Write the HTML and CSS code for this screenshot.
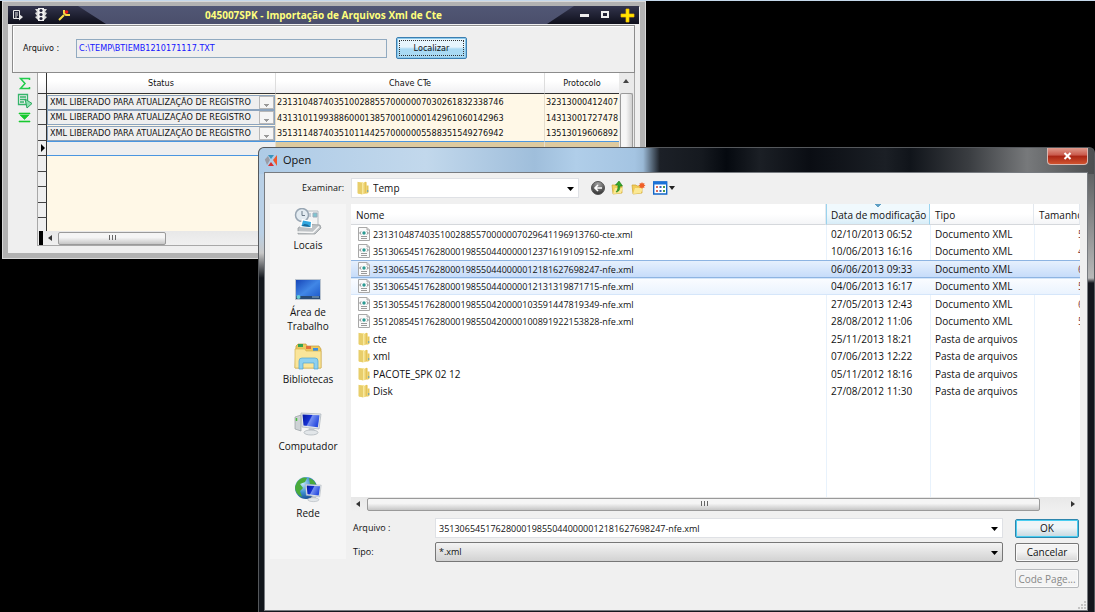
FILE: index.html
```html
<!DOCTYPE html>
<html lang="pt-BR">
<head>
<meta charset="utf-8">
<title>Importação de Arquivos Xml de Cte</title>
<link rel="stylesheet" href="styles.css">
</head>
<body>
<svg class="defs" aria-hidden="true">
  <defs>
    <linearGradient id="g-folder" x1="0" x2="1"><stop offset="0" stop-color="#fbeeaa"/><stop offset="1" stop-color="#e0b93f"/></linearGradient>
    <linearGradient id="g-screen" x1="0" x2="1" y2="1"><stop offset="0" stop-color="#1746b8"/><stop offset=".5" stop-color="#4187e6"/><stop offset="1" stop-color="#1a55c8"/></linearGradient>
    <linearGradient id="g-mon" x1="0" x2="1" y2=".4"><stop offset="0" stop-color="#0417a0"/><stop offset=".48" stop-color="#1631d2"/><stop offset=".55" stop-color="#7690f0"/><stop offset="1" stop-color="#2a4de0"/></linearGradient>
    <radialGradient id="g-globe" cx=".35" cy=".3" r=".8"><stop offset="0" stop-color="#bfe6fb"/><stop offset=".5" stop-color="#3d8fd0"/><stop offset="1" stop-color="#123f87"/></radialGradient>
    <radialGradient id="g-back" cx=".5" cy=".2" r=".8"><stop offset="0" stop-color="#a5a5a5"/><stop offset="1" stop-color="#303030"/></radialGradient>
    <symbol id="i-xml" viewBox="0 0 14 14"><path d="M1.500.5h8.500l2.500 2.500v10.500h-11z" fill="#fafafa" stroke="#a8a8a8"/><path d="M10 .5v2.500h2.500" fill="#ddd" stroke="#aaa"/><path d="M4 4.500 2.700 6 4 7.500M10 4.500 11.300 6 10 7.500" fill="none" stroke="#777"/><circle cx="7" cy="6" r="1.700" fill="#2c9a93"/><path d="M4 9.500h6M4 11.500h6" stroke="#999"/></symbol>
    <symbol id="i-folder" viewBox="0 0 14 14"><path d="M2 1h5v12H2z" fill="#f8e79b"/><path d="M1.500.8 6 2v11.500l-4.500-1.200z" fill="#e8ce6b"/><path d="M6 2.200 9.500.8l1 .4v11L6 13.500z" fill="url(#g-folder)"/><path d="M10.500 4.500h2v7l-2 1.500z" fill="#e5c75a"/><path d="M11 9h1.300v2H11z" fill="#7fa9a8"/></symbol>
    <symbol id="i-monitor" viewBox="0 0 28 24"><path d="m7 1 20 1-2 15-17-2z" fill="#e3e8ec" stroke="#a8b0b8" stroke-width=".7"/><path d="m8.500 2.500 17 .8-1.600 12-14.400-1.700z" fill="url(#g-mon)"/><path d="m15 16 5 .6 1 3-7 0z" fill="#c3cad0"/><ellipse cx="17" cy="20.500" rx="7" ry="2.500" fill="#e2e6e9" stroke="#a9b0b6" stroke-width=".7"/></symbol>
  </defs>
</svg>

<main class="desktop">
  <section class="app" aria-label="Importação de Arquivos Xml de Cte">
    <header class="app-bar">
      <div class="app-tools">
        <svg width="12" height="12" viewBox="0 0 12 12"><path d="M1.500 1.500h6v8h-6zM3 4h3M3 6h3M3 8h2" fill="none" stroke="#e8e8e8"/><path d="m7 5 4 3-4 3.500z" fill="#e8e8e8"/></svg>
        <svg width="14" height="16" viewBox="0 0 14 16"><path d="M1 2h12l-2 3 2 1-2 3 2 1-3 3H4l-3-3 2-1-2-3 2-1z" fill="#dcdcdc"/><path d="M4 1h6v13H4z" fill="#f2f2f2"/><circle cx="7" cy="3.500" r="1.600" fill="#26263c"/><circle cx="7" cy="7.500" r="1.600" fill="#26263c"/><circle cx="7" cy="11.500" r="1.600" fill="#26263c"/></svg>
        <svg width="13" height="14" viewBox="0 0 13 14"><path d="m1 12 5-5M6 2v3l2 2h4" fill="none" stroke="#f6dc45" stroke-width="2"/><circle cx="8.500" cy="4" r="1.800" fill="#e61b1b"/></svg>
      </div>
      <h1 class="app-title">045007SPK - Importação de Arquivos Xml de Cte</h1>
      <div class="app-controls">
        <button aria-label="Minimizar"><svg width="11" height="12"><path d="M1 5h9v3H1z" fill="#eee"/></svg></button>
        <button aria-label="Maximizar"><svg width="10" height="12"><path d="M2 3h6v5H2z" fill="none" stroke="#eee" stroke-width="2"/></svg></button>
        <button aria-label="Fechar"><svg width="15" height="15"><path d="M6 1h3v5h5v3H9v5H6V9H1V6h5z" fill="#ffe600" stroke="#f5b800" stroke-width=".7"/></svg></button>
      </div>
    </header>
    <div class="search">
      <label for="path">Arquivo :</label>
      <input id="path" class="path" value="C:\TEMP\BTIEMB1210171117.TXT">
      <button class="locate">Localizar</button>
    </div>
    <div class="work">
      <nav class="rail">
        <button aria-label="Somar"><svg width="13" height="13"><path d="M11.500 3V1.500h-9L7 6.500l-4.500 5h9V10" fill="none" stroke="#21cc4b" stroke-width="1.500"/></svg></button>
        <button aria-label="Exportar"><svg width="16" height="16"><path d="M1.500 1.500h9v10h-9zM3 4h6M3 6.500h6M3 9h4" fill="none" stroke="#35b56b" stroke-width="1.300"/><path d="m8 6 7 4.500L10 15z" fill="#8adfae" stroke="#2aa65d"/></svg></button>
        <button aria-label="Último"><svg width="13" height="12"><path d="M1 1h11v1H1zM2 3h9L6.500 7.500zM1 9h11v1H1z" fill="#17c92f" stroke="#17c92f" stroke-width=".6"/></svg></button>
      </nav>
      <div class="grid">
        <div class="grid-main">
          <div class="grid-view">
            <table class="cte">
              <colgroup><col class="c-mark"><col class="c-status"><col class="c-key"><col></colgroup>
              <thead><tr><th></th><th>Status</th><th>Chave CTe</th><th>Protocolo</th></tr></thead>
              <tbody>
                <tr><td></td><td><select class="status" aria-label="Status 1"><option>XML LIBERADO PARA ATUALIZAÇÃO DE REGISTRO</option></select></td><td>23131048740351002885570000007030261832338746</td><td>32313000412407</td></tr>
                <tr><td></td><td><select class="status" aria-label="Status 2"><option>XML LIBERADO PARA ATUALIZAÇÃO DE REGISTRO</option></select></td><td>43131011993886000138570010000142961060142963</td><td>14313001727478</td></tr>
                <tr><td></td><td><select class="status" aria-label="Status 3"><option>XML LIBERADO PARA ATUALIZAÇÃO DE REGISTRO</option></select></td><td>35131148740351011442570000005588351549276942</td><td>13513019606892</td></tr>
                <tr class="current"><td><svg width="6" height="8"><path d="M1 0v8l4-4z"/></svg></td><td></td><td></td><td></td></tr>
                <tr class="blank"><td></td><td colspan="3"></td></tr>
                <tr class="blank"><td></td><td colspan="3"></td></tr>
                <tr class="blank"><td></td><td colspan="3"></td></tr>
                <tr class="blank"><td></td><td colspan="3"></td></tr>
                <tr class="blank"><td></td><td colspan="3"></td></tr>
              </tbody>
            </table>
          </div>
          <div class="vscroll"><svg width="7" height="20"><path d="M0 10h6L3 6z" fill="#444"/></svg><div class="vthumb"></div></div>
        </div>
        <div class="hscroll"><i class="stop"></i><svg width="12" height="8"><path d="M9 1v6L5 4z" fill="#333"/></svg><div class="hthumb short"><svg width="8" height="6"><path d="M1.500 0v5M4.500 0v5M7.500 0v5" stroke="#666"/></svg></div></div>
      </div>
    </div>
  </section>

  <section class="dialog" role="dialog" aria-label="Open">
    <header class="dlg-bar">
      <svg width="14" height="13" viewBox="0 0 14 13"><path d="m4 1 3 4 3-4z" fill="#3a93bd"/><path d="m13 1-4 5 4 6z" fill="#f0572b"/><path d="m4 12 3-4 3 4z" fill="#d92f2f"/><path d="M4 2 .800 5.500 3 11l3-5z" fill="#9a9ca6"/></svg>
      <h2 class="dlg-title">Open</h2>
      <button class="close" aria-label="Fechar"><svg width="9" height="8"><path d="m1.500 1 6 6m0-6-6 6" stroke="#fff" stroke-width="2"/></svg></button>
    </header>
    <div class="dlg-body">
      <div class="lookbar">
        <label for="look">Examinar:</label>
        <div class="combo look">
          <svg class="lead" width="14" height="14"><use href="#i-folder"/></svg>
          <select id="look"><option>Temp</option></select>
          <svg class="arrow" width="7" height="4"><path d="M0 0h7L3.500 4z"/></svg>
        </div>
        <div class="look-tools">
          <button aria-label="Voltar"><svg width="14" height="14"><circle cx="7" cy="7" r="6.500" fill="url(#g-back)" stroke="#555"/><path d="M11 7H4m3-3L4 7l3 3" fill="none" stroke="#fff" stroke-width="1.600"/></svg></button>
          <button aria-label="Subir"><svg width="14" height="15"><path d="M1 5h4l1 1h5v7l-9 1z" fill="#f2d15c" stroke="#cfa530" stroke-width=".7"/><path d="m2 14 2-6h8l-2 5z" fill="#fbe995"/><path d="M5 12c3 0 4-3 4-6H11.500L8 1 4.500 5H7c0 3 0 5-2 7z" fill="#35a82a" stroke="#1c7b16" stroke-width=".6"/></svg></button>
          <button aria-label="Nova pasta"><svg width="15" height="14"><path d="M1 4h4l1 1h5v7l-9 1z" fill="#f1cc59" stroke="#cfa530" stroke-width=".7"/><path d="m2 13 2-6h8l-2 5z" fill="#fbe995"/><path d="m11 1 .8 1.400 1.700-.4-.5 1.600 1.500.9-1.500.8.5 1.600-1.700-.4L11 8l-.8-1.500-1.700.4.500-1.600-1.500-.8 1.500-.9-.5-1.600 1.700.4z" fill="#ef5f28"/></svg></button>
          <button aria-label="Exibir"><svg width="23" height="14"><path d="M.7 1h13v12H.7z" fill="#fff" stroke="#1266c8" stroke-width="1.400"/><path d="M0 .5h14v3H0z" fill="#1a72d8"/><path d="M3 5h2v2H3zM3 9h2v2H3z" fill="#d96b5a"/><path d="M6.500 5h2v2h-2zM6.500 9h2v2h-2z" fill="#3561c0"/><path d="M10 5h2v2h-2zM10 9h2v2h-2z" fill="#4a9a4a"/><path d="M16 5h6l-3 4z" fill="#222"/></svg></button>
        </div>
      </div>
      <div class="dlg-main">
        <nav class="places">
          <a href="#"><svg width="28" height="28" viewBox="0 0 28 28"><path d="M10 3h14v16H10z" fill="#f4f4f4" stroke="#b6bcc1"/><path d="M12 6h5M12 8h5M19 5h4v4h-4z" stroke="#9ab" fill="#7ec6d0"/><circle cx="8" cy="7" r="6.500" fill="#e3ebf1" stroke="#98a6b3" stroke-width="1.500"/><path d="M8 3v4.500h3" fill="none" stroke="#6c7c8a"/><path d="m4 20 6-4 16 1 1 3-6 6H4z" fill="#bfc3c6" stroke="#8d9296" stroke-width=".7"/><path d="m3 24 16 .500 6-6" fill="none" stroke="#f6f6f6" stroke-width="1.500"/><path d="m8 11 10 2v7L6 19z" fill="#fff"/><path d="m9 12.500 8 1.500-.5 5L7.500 18z" fill="#31a7df"/><path d="m7.500 18 3-2 3 .5 3 2.500z" fill="#196a9b"/></svg><span>Locais</span></a>
          <a href="#"><svg width="28" height="28" viewBox="0 0 28 28"><path d="M1 4h26v21H1z" fill="#b9c3cf"/><path d="M2 5h24v19H2z" fill="url(#g-screen)"/><path d="M2 21h24v3H2z" fill="#294b74"/><circle cx="4.500" cy="22" r="2" fill="#66cbd4"/><path d="M18 22h7" stroke="#8fb1cc"/></svg><span>Área de Trabalho</span></a>
          <a href="#"><svg width="28" height="28" viewBox="0 0 28 28"><path d="M2 4 4 2h8l1 2h12l2 3v19H1z" fill="#ecc85f" stroke="#c49c36" stroke-width=".7"/><path d="M4 2h5v3H4z" fill="#35a353"/><path d="M12 4h5v3h-5z" fill="#e4703d"/><path d="M19 6h5v3h-5z" fill="#3c8fdd"/><path d="M1 7h10l1 2h15v17H1z" fill="#fae59a" stroke="#d6b450" stroke-width=".7"/><path d="M5 27v-8q0-3 3-3h13q3 0 3 3v8h-4v-6H9v6z" fill="#8ed0ef" stroke="#4ea5d2" stroke-width=".7"/></svg><span>Bibliotecas</span></a>
          <a href="#"><svg width="28" height="28" viewBox="0 0 28 28"><path d="m1 8 6-2v16l-6-2z" fill="#cdd2d5" stroke="#979da2" stroke-width=".7"/><path d="M2.500 9v3" stroke="#49bd3d" stroke-width="1.500"/><svg y="3" width="28" height="24"><use href="#i-monitor"/></svg></svg><span>Computador</span></a>
          <a href="#"><svg width="28" height="28" viewBox="0 0 28 28"><circle cx="12" cy="12" r="11" fill="url(#g-globe)"/><path d="M3 6q5-6 10-4l-2 4-5 2 3 4-3 3 2 6q-7-3-7-10zM15 2q6 2 7 7l-6-1z" fill="#4aab3a"/><svg x="6" y="6" width="22" height="22"><use href="#i-monitor"/></svg></svg><span>Rede</span></a>
        </nav>
        <div class="pane">
          <div class="list">
            <table class="files">
              <colgroup><col><col class="c-date"><col class="c-type"><col class="c-size"></colgroup>
              <thead><tr><th>Nome</th><th class="sorted">Data de modificação</th><th>Tipo</th><th>Tamanho</th></tr></thead>
              <tbody>
                <tr><td class="doc"><svg width="14" height="14"><use href="#i-xml"/></svg>23131048740351002885570000007029641196913760-cte.xml</td><td>02/10/2013 06:52</td><td>Documento XML</td><td class="size">5 KB</td></tr>
                <tr><td class="doc"><svg width="14" height="14"><use href="#i-xml"/></svg>35130654517628000198550440000012371619109152-nfe.xml</td><td>10/06/2013 16:16</td><td>Documento XML</td><td class="size">4 KB</td></tr>
                <tr class="selected"><td class="doc"><svg width="14" height="14"><use href="#i-xml"/></svg>35130654517628000198550440000012181627698247-nfe.xml</td><td>06/06/2013 09:33</td><td>Documento XML</td><td class="size">6 KB</td></tr>
                <tr class="hover"><td class="doc"><svg width="14" height="14"><use href="#i-xml"/></svg>35130654517628000198550440000012131319871715-nfe.xml</td><td>04/06/2013 16:17</td><td>Documento XML</td><td class="size">5 KB</td></tr>
                <tr><td class="doc"><svg width="14" height="14"><use href="#i-xml"/></svg>35130554517628000198550420000103591447819349-nfe.xml</td><td>27/05/2013 12:43</td><td>Documento XML</td><td class="size">6 KB</td></tr>
                <tr><td class="doc"><svg width="14" height="14"><use href="#i-xml"/></svg>35120854517628000198550420000100891922153828-nfe.xml</td><td>28/08/2012 11:06</td><td>Documento XML</td><td class="size">5 KB</td></tr>
                <tr><td><svg width="14" height="14"><use href="#i-folder"/></svg>cte</td><td>25/11/2013 18:21</td><td>Pasta de arquivos</td><td></td></tr>
                <tr><td><svg width="14" height="14"><use href="#i-folder"/></svg>xml</td><td>07/06/2013 12:22</td><td>Pasta de arquivos</td><td></td></tr>
                <tr><td><svg width="14" height="14"><use href="#i-folder"/></svg>PACOTE_SPK 02 12</td><td>05/11/2012 18:16</td><td>Pasta de arquivos</td><td></td></tr>
                <tr><td><svg width="14" height="14"><use href="#i-folder"/></svg>Disk</td><td>27/08/2012 11:30</td><td>Pasta de arquivos</td><td></td></tr>
              </tbody>
            </table>
          </div>
          <div class="hscroll"><svg width="16" height="8"><path d="M9 1v6L5 4z" fill="#333"/></svg><div class="hthumb long"><svg width="8" height="6"><path d="M1.500 0v5M4.500 0v5M7.500 0v5" stroke="#666"/></svg></div><svg width="40" height="8"><path d="M31 1v6l4-3z" fill="#333"/></svg></div>
          <form class="form">
            <label for="file">Arquivo :</label>
            <div class="combo"><input id="file" value="35130654517628000198550440000012181627698247-nfe.xml"><svg class="arrow" width="7" height="4"><path d="M0 0h7L3.500 4z"/></svg></div>
            <button type="button" class="btn ok">OK</button>
            <label for="kind">Tipo:</label>
            <div class="combo kind"><select id="kind"><option>*.xml</option></select><svg class="arrow" width="7" height="4"><path d="M0 0h7L3.500 4z"/></svg></div>
            <button type="button" class="btn">Cancelar</button>
            <button type="button" class="btn code" disabled>Code Page...</button>
          </form>
        </div>
      </div>
      <svg class="grip" width="9" height="9"><path d="M7 1h2v2H7zM4 4h2v2H4zM7 4h2v2H7zM1 7h2v2H1zM4 7h2v2H4zM7 7h2v2H7z" fill="#c4c4c4"/></svg>
    </div>
  </section>
</main>
</body>
</html>
```
FILE: styles.css
```css
* { box-sizing: border-box; }
body {
  margin: 0;
  background: #000;
  color: #111;
  font: 10px/14px "Open Sans", "Noto Sans", sans-serif;
}
button, input, select {
  margin: 0;
  padding: 0;
  border: 0;
  background: none;
  color: inherit;
  font: inherit;
  appearance: none;
}
svg { display: block; flex: none; }
h1, h2 { margin: 0; font-size: inherit; }
table { width: 100%; border-collapse: separate; border-spacing: 0; table-layout: fixed; }
th, td { padding: 0; white-space: nowrap; overflow: hidden; text-align: left; font-weight: 400; }
.defs { position: absolute; width: 0; height: 0; }

.desktop {
  position: relative;
  height: 100vh;
  overflow: hidden;
  border-top: 1px solid #c5d8eb;
}

/* Import window */
.app {
  position: absolute;
  left: 2px;
  top: 0;
  width: 644px;
  padding: 4px 6px 6px 5px;
  background: #efefef;
  border: 1px solid #d8d8d8;
  box-shadow: inset 0 0 0 5px #b2b2b2;
  font: 9px/14px "DejaVu Sans Condensed", "Open Sans", sans-serif;
}
.app-bar {
  display: grid;
  grid-template-columns: 100px 1fr 100px;
  align-items: center;
  height: 18px;
  background: linear-gradient(#515775, #4b4f6c);
}
.app-tools, .app-controls { display: flex; align-items: center; height: 100%; background: linear-gradient(#32344c, #0f101c); }
.app-tools { gap: 10px; padding-left: 4px; clip-path: polygon(0 0, 70% 0, 98% 100%, 0 100%); }
.app-controls { gap: 10px; padding-right: 4px; justify-content: flex-end; clip-path: polygon(35% 0, 100% 0, 100% 100%, 8% 100%); }
.app-title { color: #ffff7d; font: bold 10px/18px "Open Sans", sans-serif; text-align: center; white-space: nowrap; }
.search {
  display: flex;
  align-items: center;
  height: 48px;
  margin: 1px 4px 0;
  padding: 0 10px 2px;
  border: 1px solid #8c8c8c;
  box-shadow: inset 1px 1px #fff;
}
.search label { width: 53px; }
.path { width: 311px; height: 19px; padding: 0 2px; border: 1px solid #91aac0; color: #1414ff; }
.locate {
  width: 71px;
  height: 22px;
  margin-left: 9px;
  border: 1px solid #3c7fb1;
  border-radius: 2px;
  background: linear-gradient(#e6f5fd 45%, #a9daf4 55%);
  box-shadow: inset 0 0 0 1px #8cc8ea;
  outline: 1px dotted #333;
  outline-offset: -4px;
}
.work { display: flex; padding: 0 4px 6px; }
.rail { display: flex; flex-direction: column; align-items: center; gap: 3px; width: 25px; padding-top: 4px; }
.grid { flex: 1; min-width: 0; border: solid #a8a8a8; border-width: 0 1px 1px; }
.grid-main { display: flex; height: 158px; }
.grid-view { flex: 1; min-width: 0; overflow: hidden; background: #fff8e7; }
.c-mark { width: 9px; }
.c-status { width: 229px; }
.c-key { width: 269px; }
.cte th { height: 21px; text-align: center; background: linear-gradient(#fff 40%, #f0f0f2); border-right: 1px solid #ddd; border-bottom: 1px solid #333; }
.cte td { height: 15px; line-height: 14px; padding-left: 1px; border-right: 1px solid #e4ddcd; }
.cte td:last-child, .cte th:last-child { border-right: 0; }
.cte tr:nth-child(odd) td { height: 16px; }
.cte td:first-child { background: #efefef; border-right: 1px solid #333; border-bottom: 1px solid #444; padding-left: 2px; }
.cte th:first-child { border-right-color: #333; }
.cte td:nth-child(2) { padding: 0; }
.status {
  display: block;
  width: 100%;
  height: 15px;
  padding: 0 16px 0 2px;
  border: 1px solid #8ba3bd;
  background:
    linear-gradient(#999, #999) right 5px top 8px / 5px 1px no-repeat,
    linear-gradient(#999, #999) right 6px top 9px / 3px 1px no-repeat,
    linear-gradient(#999, #999) right 7px top 10px / 1px 1px no-repeat,
    linear-gradient(#f5f5f5, #f5f5f5) right 1px top 1px / 13px 11px no-repeat,
    linear-gradient(#b8b8b8, #b8b8b8) right 0 top 0 / 15px 13px no-repeat,
    #efefef;
  overflow: hidden;
  white-space: nowrap;
  line-height: 13px;
}
.current td { background: #ddca9f; border-top: 1px solid #4a96e0; }
.current td:first-child { border-top: 0; }
.current td:nth-child(2) { background: #efefef; border-bottom: 1px solid #4a96e0; }
.blank td { border-right: 0; }
.vscroll { display: flex; flex-direction: column; align-items: center; width: 15px; background: #eaeaea; }
.vthumb { flex: 1; width: 13px; border: 1px solid #9a9a9a; border-bottom: 0; border-radius: 2px; background: linear-gradient(90deg, #f6f6f6 45%, #cfcfcf); }
.hscroll { display: flex; align-items: center; height: 14px; background: linear-gradient(#e8e8e8, #f0f0f0); }
.stop { width: 4px; height: 14px; margin-left: 1px; background: #000; }
.hthumb { display: flex; align-items: center; justify-content: center; height: 13px; border: 1px solid #9a9a9a; border-radius: 2px; background: linear-gradient(#f5f5f5 40%, #c6c6c6); }
.short { width: 108px; margin-left: 3px; }
.long { flex: 1; }

/* File dialog */
.dialog {
  position: absolute;
  left: 258px;
  top: 146px;
  right: 0;
  bottom: 0;
  display: flex;
  flex-direction: column;
  padding: 0 6px 1px 5px;
  border: 1px solid #55585c;
  border-bottom: 0;
  border-radius: 6px 6px 0 0;
  background:
    linear-gradient(90deg, #aecbe6, #c2d8ec 20%, #9fbedb 33%, #b0cee9 38%, #a4c4e2 45%, #9ab9d6 46%, #1c2027 48%, #15191f 53%, #05090f 56%, #1b1f25 60%, #0a0d13 66%, #1b1f25 75%, #10141a 78%, #3a3d41 85%, #77797b 92%, #4c4e50) top / 100% 26px no-repeat,
    linear-gradient(#b9d0e6 85px, #c8c8c8 105px, #11151b 130px) left / 6px 100% no-repeat,
    linear-gradient(#4c4e50, #b8b8b8 130px, #14161d 135px) right / 7px 100% no-repeat,
    #14161d;
}
.dlg-bar { display: flex; align-items: center; height: 24px; flex: none; color: #101010; }
.dlg-title { flex: 1; margin-left: 5px; font-size: 11px; font-weight: 400; }
.close {
  display: flex;
  align-items: center;
  justify-content: center;
  align-self: flex-start;
  width: 41px;
  height: 17px;
  border: 1px solid #d8b8b2;
  border-top: 0;
  border-radius: 0 0 4px 4px;
  background: linear-gradient(#e09a8c, #c9584a 45%, #a92414 50%, #d0532f);
}
.dlg-body {
  position: relative;
  flex: 1;
  min-height: 0;
  padding: 4px 7px 0 5px;
  border: 1px solid #777b80;
  background: #f0f0f0;
}
.lookbar { display: flex; align-items: center; height: 21px; }
.lookbar label { width: 81px; padding-right: 7px; text-align: right; font-size: 9px; }
.combo { position: relative; display: flex; align-items: center; height: 20px; background: #fff; border: 1px solid #dfe1e5; }
.combo input, .combo select { flex: 1; min-width: 0; height: 100%; padding-left: 3px; }
.look { width: 228px; }
.lead { margin-left: 4px; }
.arrow { position: absolute; right: 4px; top: 8px; }
.look-tools { display: flex; gap: 6px; margin-left: 12px; }
.look-tools button:last-child { margin-left: 1px; }
.dlg-main { display: flex; gap: 5px; margin-top: 6px; }
.places { display: flex; flex-direction: column; align-items: center; width: 76px; height: 355px; padding-top: 4px; background: #f5f5f5; }
.places a { display: flex; flex-direction: column; align-items: center; width: 60px; height: 67px; color: inherit; text-align: center; text-decoration: none; }
.places span { padding-top: 2px; }
.pane { flex: 1; min-width: 0; }
.list {
  height: 293px;
  overflow: hidden;
  background:
    linear-gradient(#e8f2fc, #e8f2fc) right 253px top / 1px 100% no-repeat,
    linear-gradient(#e8f2fc, #e8f2fc) right 149px top / 1px 100% no-repeat,
    linear-gradient(#e8f2fc, #e8f2fc) right 45px top / 1px 100% no-repeat,
    #fff;
}
.c-date, .c-type { width: 104px; }
.c-size { width: 46px; }
.files th { height: 21px; padding: 2px 0 0 5px; border-right: 1px solid #e3e8ee; border-bottom: 1px solid #d5d8dc; background: linear-gradient(#fff 50%, #f4f5f7); }
.files .sorted {
  padding-left: 4px;
  background:
    linear-gradient(#5e9fc4, #5e9fc4) center top 0 / 6px 1px no-repeat,
    linear-gradient(#5e9fc4, #5e9fc4) center top 1px / 4px 1px no-repeat,
    linear-gradient(#5e9fc4, #5e9fc4) center top 2px / 2px 1px no-repeat,
    linear-gradient(#f0f9fd 50%, #d8edf8);
  border-right-color: #9ad3ee;
  border-left: 1px solid #9ad3ee;
}
.files td { height: 18px; padding-left: 5px; line-height: 15px; border: solid transparent; border-width: 1px 0; }
.files tr:nth-child(even) td { height: 17px; }
.files td:first-child { padding-left: 6px; }
.files td.doc { font-size: 9px; }
.files td svg { display: inline-block; margin-right: 2px; vertical-align: top; }
.files td.size { padding-left: 44px; color: #844; }
.files .selected td { background: linear-gradient(#e6f0fd, #c6dcfa); border-color: #8db4e2; }
.files .hover td { background: linear-gradient(#fafcff, #eaf3fe); border-color: #d5e6fa; }
.form {
  display: grid;
  grid-template-columns: 84px 1fr 76px;
  grid-auto-rows: 20px;
  align-items: center;
  row-gap: 4px;
  padding: 7px 1px 0 0;
}
.form label { padding-left: 2px; font-size: 9px; }
.form .combo { font-size: 9px; }
.form .kind { border: 1px solid #777; border-radius: 2px; background: linear-gradient(#f3f3f3, #d2d2d2); }
.btn {
  height: 19px;
  margin-left: 12px;
  width: 64px;
  border: 1px solid #777;
  border-radius: 2px;
  background: linear-gradient(#f3f3f3 45%, #d6d6d6);
  box-shadow: inset 0 0 0 1px #fafafa;
}
.ok { border-color: #2d86ad; box-shadow: inset 0 0 0 1px #48cdf1; background: linear-gradient(#eef4f7 45%, #c5d7df); }
.code { grid-column: 3; margin-top: 5px; border-color: #b5b8bb; background: #f4f4f4; color: #888; }
.grip { position: absolute; right: 1px; bottom: 1px; }
```
